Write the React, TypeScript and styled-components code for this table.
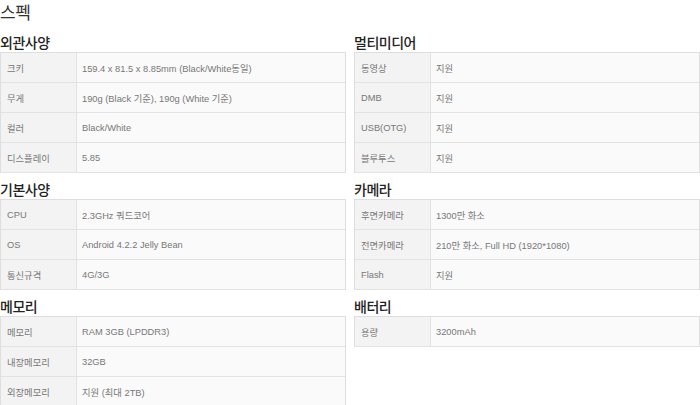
import React from "react";
import styled, { createGlobalStyle } from "styled-components";

const Global = createGlobalStyle`
  html, body { margin: 0; padding: 0; background: #fff; }
  body { font-family: "Noto Sans CJK KR", "Noto Sans", sans-serif; }
`;

const Page = styled.div`
  width: 700px;
  height: 405px;
  overflow: hidden;
  background: #fff;
`;

const Title = styled.h1`
  margin: 0;
  height: 26px;
  box-sizing: border-box;
  padding-top: 0;
  font-size: 17px;
  line-height: 24px;
  font-weight: 400;
  color: #333;
  letter-spacing: -0.5px;
`;

const Columns = styled.div`
  display: grid;
  grid-template-columns: 346px 346px;
  column-gap: 8px;
  align-items: start;
`;

const Column = styled.div`
  display: flex;
  flex-direction: column;
`;

const SectionTitle = styled.h2`
  margin: 0;
  height: 26px;
  box-sizing: border-box;
  padding: 6px 0 0 0;
  font-size: 14px;
  line-height: 20px;
  font-weight: 500;
  color: #222;
  letter-spacing: -0.5px;
`;

const Table = styled.div`
  border: 1px solid #dedede;
  border-bottom: none;
  display: flex;
  flex-direction: column;
`;

const Row = styled.div`
  display: grid;
  grid-template-columns: 76px 1fr;
  height: 30px;
  box-sizing: border-box;
  border-bottom: 1px solid #e2e2e2;
`;

const Cell = styled.div<{ $label?: boolean }>`
  display: flex;
  align-items: center;
  padding-left: ${(p) => (p.$label ? "6px" : "5px")};
  background: ${(p) => (p.$label ? "#f3f3f3" : "#fafafa")};
  ${(p) => (p.$label ? "border-right: 1px solid #e2e2e2;" : "")}
  font-family: "Liberation Sans", "Noto Sans CJK KR", sans-serif;
  font-size: 9.3px;
  color: #777;
  white-space: nowrap;
`;

type Sec = { title: string; rows: [string, string][] };

const left: Sec[] = [
  {
    title: "외관사양",
    rows: [
      ["크키", "159.4 x 81.5 x 8.85mm (Black/White동일)"],
      ["무게", "190g (Black 기준), 190g (White 기준)"],
      ["컬러", "Black/White"],
      ["디스플레이", "5.85"],
    ],
  },
  {
    title: "기본사양",
    rows: [
      ["CPU", "2.3GHz 쿼드코어"],
      ["OS", "Android 4.2.2 Jelly Bean"],
      ["통신규격", "4G/3G"],
    ],
  },
  {
    title: "메모리",
    rows: [
      ["메모리", "RAM 3GB (LPDDR3)"],
      ["내장메모리", "32GB"],
      ["외장메모리", "지원 (최대 2TB)"],
    ],
  },
];

const right: Sec[] = [
  {
    title: "멀티미디어",
    rows: [
      ["동영상", "지원"],
      ["DMB", "지원"],
      ["USB(OTG)", "지원"],
      ["블루투스", "지원"],
    ],
  },
  {
    title: "카메라",
    rows: [
      ["후면카메라", "1300만 화소"],
      ["전면카메라", "210만 화소, Full HD (1920*1080)"],
      ["Flash", "지원"],
    ],
  },
  {
    title: "배터리",
    rows: [["용량", "3200mAh"]],
  },
];

function Section({ s }: { s: Sec }) {
  return (
    <>
      <SectionTitle>{s.title}</SectionTitle>
      <Table>
        {s.rows.map(([k, v]) => (
          <Row key={k}>
            <Cell $label>{k}</Cell>
            <Cell>{v}</Cell>
          </Row>
        ))}
      </Table>
    </>
  );
}

export default function App() {
  return (
    <Page>
      <Global />
      <Title>스펙</Title>
      <Columns>
        <Column>
          {left.map((s) => (
            <Section key={s.title} s={s} />
          ))}
        </Column>
        <Column>
          {right.map((s) => (
            <Section key={s.title} s={s} />
          ))}
        </Column>
      </Columns>
    </Page>
  );
}
